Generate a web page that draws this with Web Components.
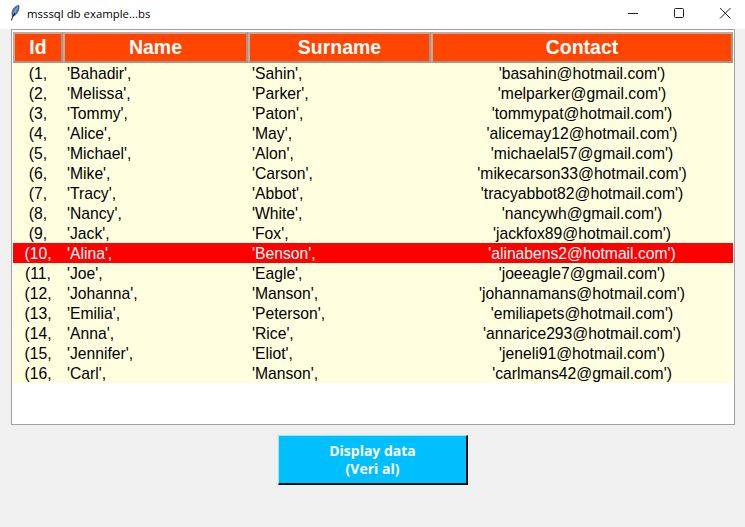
<!DOCTYPE html>
<html>
<head>
<meta charset="utf-8">
<title>mssql db example</title>
<style>
    html, body{
        margin: 0;
        height: 100%;
        background-color: #f0f0f0;
    }
</style>
</head>
<body>
<app-window>
    <title-bar slot="title">msssql db example...bs</title-bar>
    <tree-view id="table"></tree-view>
    <action-button>Display data<br>(Veri al)</action-button>
</app-window>
<script>
const people = [
    ["(1,", "'Bahadir',", "'Sahin',", "'basahin@hotmail.com')"],
    ["(2,", "'Melissa',", "'Parker',", "'melparker@gmail.com')"],
    ["(3,", "'Tommy',", "'Paton',", "'tommypat@hotmail.com')"],
    ["(4,", "'Alice',", "'May',", "'alicemay12@hotmail.com')"],
    ["(5,", "'Michael',", "'Alon',", "'michaelal57@gmail.com')"],
    ["(6,", "'Mike',", "'Carson',", "'mikecarson33@hotmail.com')"],
    ["(7,", "'Tracy',", "'Abbot',", "'tracyabbot82@hotmail.com')"],
    ["(8,", "'Nancy',", "'White',", "'nancywh@gmail.com')"],
    ["(9,", "'Jack',", "'Fox',", "'jackfox89@hotmail.com')"],
    ["(10,", "'Alina',", "'Benson',", "'alinabens2@hotmail.com')"],
    ["(11,", "'Joe',", "'Eagle',", "'joeeagle7@gmail.com')"],
    ["(12,", "'Johanna',", "'Manson',", "'johannamans@hotmail.com')"],
    ["(13,", "'Emilia',", "'Peterson',", "'emiliapets@hotmail.com')"],
    ["(14,", "'Anna',", "'Rice',", "'annarice293@hotmail.com')"],
    ["(15,", "'Jennifer',", "'Eliot',", "'jeneli91@hotmail.com')"],
    ["(16,", "'Carl',", "'Manson',", "'carlmans42@gmail.com')"]
];

class AppWindow extends HTMLElement{
    constructor(){
        super();
        this.attachShadow({ mode: "open" });
        this.shadowRoot.innerHTML = `
<style>
    :host{
        display: flex;
        flex-direction: column;
        width: 745px;
        height: 527px;
        overflow: hidden;
    }
    main{
        display: flex;
        flex-direction: column;
        align-items: center;
        padding: 0 10px 0 11px;
        gap: 10px;
    }
</style>
<slot name="title"></slot>
<main><slot></slot></main>`;
    }
}
customElements.define("app-window", AppWindow);

class TitleBar extends HTMLElement{
    constructor(){
        super();
        this.attachShadow({ mode: "open" });
        this.shadowRoot.innerHTML = `
<style>
    :host{
        display: flex;
        align-items: center;
        height: 29px;
        background-color: #fff;
        color: #000;
        font: 11.4px "Open Sans", "Noto Sans", sans-serif;
    }
    .feather{
        width: 16px;
        height: 16px;
        margin-left: 6px;
        margin-right: 5px;
        margin-top: -3px;
    }
    .text{
        flex: 1;
        margin-top: -3px;
    }
    .ctl{
        box-sizing: border-box;
        width: 46px;
        height: 29px;
        padding-left: 6px;
        display: flex;
        align-items: center;
        justify-content: center;
    }
    .ctl svg{
        width: 12px;
        height: 12px;
        margin-top: -3px;
        fill: none;
        stroke: #222;
        stroke-width: 1;
    }
</style>
<svg class="feather" viewBox="0 0 16 16">
    <path d="M13 .5C9.500 .5 6 4 6 9L6.500 11.500C10 10.500 13.500 6 13 .5Z" fill="#4f7dc0" stroke="#27406e" stroke-width=".7"/>
    <path d="M11.500 2.500C10 4 9 6 8.800 8" fill="none" stroke="#a9c4ea" stroke-width=".8"/>
    <path d="M9 8L6.500 12L5.500 15.500" fill="none" stroke="#10182a" stroke-width="1"/>
</svg>
<span class="text"><slot></slot></span>
<span class="ctl"><svg viewBox="0 0 12 12"><path d="M1 6.500H11"/></svg></span>
<span class="ctl"><svg viewBox="0 0 12 12"><rect x="1.500" y="1.500" width="9" height="9" rx="1"/></svg></span>
<span class="ctl"><svg viewBox="0 0 12 12"><path d="M1 1L11.500 11.500M11.500 1L1 11.500"/></svg></span>`;
    }
}
customElements.define("title-bar", TitleBar);

class TreeRow extends HTMLElement{
    constructor(){
        super();
        this.attachShadow({ mode: "open" });
        this.shadowRoot.innerHTML = `
<style>
    :host{
        display: grid;
        grid-template-columns: 50px 185px 183px 302px;
        height: 20px;
        background-color: #ffffe0;
        color: #000;
        font: 15.7px/22px "Liberation Sans", Arial, sans-serif;
        white-space: nowrap;
    }
    :host([selected]){
        background-color: #ff0000;
        color: #fff;
    }
    span{
        height: 20px;
    }
    .mid{
        text-align: center;
    }
    .left{
        padding-left: 4px;
    }
</style>
<span class="mid" id="c0"></span>
<span class="left" id="c1"></span>
<span class="left" id="c2"></span>
<span class="mid" id="c3"></span>`;
    }
    set values(list){
        list.forEach((text, i) => {
            this.shadowRoot.querySelector("#c" + i).textContent = text;
        });
    }
}
customElements.define("tree-row", TreeRow);

class TreeView extends HTMLElement{
    constructor(){
        super();
        this.attachShadow({ mode: "open" });
        this.shadowRoot.innerHTML = `
<style>
    :host{
        display: block;
        box-sizing: border-box;
        width: 724px;
        height: 396px;
        padding: 2px 1px 0;
        background-color: #fff;
        border: 1px solid #a0a0a0;
    }
    #head{
        display: grid;
        grid-template-columns: 50px 185px 183px 302px;
        height: 31px;
    }
    #head span{
        box-sizing: border-box;
        display: flex;
        align-items: center;
        justify-content: center;
        background-color: #ff4500;
        border-style: solid;
        border-width: 2px;
        border-color: #c8a898 #a8948a #a8948a #c8a898;
        color: #fff;
        font: bold 19.5px "Liberation Sans", Arial, sans-serif;
    }
</style>
<div id="head">
    <span>Id</span><span>Name</span><span>Surname</span><span>Contact</span>
</div>
<div id="rows"></div>`;
    }
    connectedCallback(){
        const rows = this.shadowRoot.querySelector("#rows");
        people.forEach((person, i) => {
            const row = document.createElement("tree-row");
            row.values = person;
            if (i === 9) row.setAttribute("selected", "");
            rows.appendChild(row);
        });
    }
}
customElements.define("tree-view", TreeView);

class ActionButton extends HTMLElement{
    constructor(){
        super();
        this.attachShadow({ mode: "open" });
        this.shadowRoot.innerHTML = `
<style>
    :host{
        display: flex;
        box-sizing: border-box;
        align-items: center;
        justify-content: center;
        width: 190px;
        height: 50px;
        background-color: #00bfff;
        border-style: solid;
        border-width: 1px 2px 2px 1px;
        border-color: #9fe5ff #111 #111 #9fe5ff;
        color: #fff;
        text-align: center;
        font: bold 14px/18px "Open Sans", "Noto Sans", sans-serif;
    }
</style>
<div><slot></slot></div>`;
    }
}
customElements.define("action-button", ActionButton);
</script>
</body>
</html>
